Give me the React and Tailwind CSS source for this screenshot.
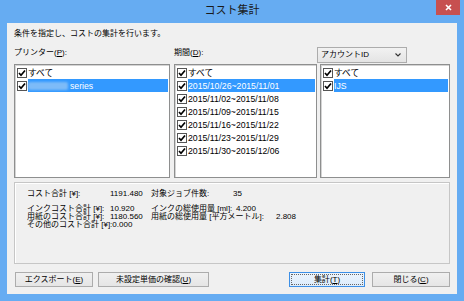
import React from 'react';

const PERIODS = [
  '2015/10/26~2015/11/01',
  '2015/11/02~2015/11/08',
  '2015/11/09~2015/11/15',
  '2015/11/16~2015/11/22',
  '2015/11/23~2015/11/29',
  '2015/11/30~2015/12/06',
];

const Check = () => (
  <span className="w-[10px] h-[10px] shrink-0 border border-[#555] bg-white flex items-center justify-center">
    <svg width="8" height="8" viewBox="0 0 8 8">
      <path d="M1 4 L3 6.2 L7 1.5" stroke="#000" strokeWidth="1.7" fill="none" />
    </svg>
  </span>
);

const Row = ({ children, selected }) => (
  <div className="h-[13px] flex items-center">
    <Check />
    <span
      className={`flex-1 h-[13px] ml-[1px] mr-[1px] flex items-center whitespace-nowrap text-[8.7px] ${
        selected ? 'bg-[#3399ff] text-white' : ''
      }`}
    >
      {children}
    </span>
  </div>
);

const ListBox = ({ className, children }) => (
  <div
    className={`h-[114px] bg-white border border-[#8e8f8f] shadow-[inset_1px_1px_0_#d4d4d4] pt-[1px] pl-[2px] ${className}`}
  >
    {children}
  </div>
);

const Key = ({ k }) => (
  <>
    (<span className="underline underline-offset-[1px]">{k}</span>)
  </>
);

const Button = ({ className, children, primary }) => (
  <div
    className={`h-[15px] flex items-center justify-center border ${
      primary
        ? 'border-[#3c8fe6] bg-gradient-to-b from-[#ecf4fc] to-[#dcecfc] p-[1px]'
        : 'border-[#acacac] bg-gradient-to-b from-[#f0f0f0] to-[#e5e5e5]'
    } ${className}`}
  >
    {children}
  </div>
);

export default function App() {
  return (
    <div className="w-[464px] h-[301px] bg-[#66acf2] flex flex-col text-[8px] leading-[10px] text-black font-['Liberation_Sans','Noto_Sans_CJK_JP',sans-serif]">
      <div className="relative h-[23px] flex items-center justify-center">
        <span className="text-[11px] leading-[12px] -mt-[3px] text-[#1a1a1a]">コスト集計</span>
        <div className="absolute top-0 right-[4px] w-[24px] h-[15px] bg-[#c75050] flex items-center justify-center">
          <svg width="7" height="7" viewBox="0 0 7 7">
            <path d="M1 1 L6 6 M6 1 L1 6" stroke="#fff" strokeWidth="1.6" />
          </svg>
        </div>
      </div>

      <div className="mx-[7px] h-[271px] bg-[#f0f0f0] flex flex-col px-[7px] pt-[6px]">
        <div className="h-[10px] whitespace-nowrap">条件を指定し、コストの集計を行います。</div>

        <div className="mt-[8px] flex">
          <div className="w-[156px] flex flex-col">
            <div className="h-[17px] pt-[1px]">
              プリンター<Key k="P" />:
            </div>
            <ListBox>
              <Row>すべて</Row>
              <Row selected>
                <span className="w-[40px] h-[8px] bg-[#7dbbf8] blur-[1px] rounded-[2px]" />
                <span className="ml-[2px]">series</span>
              </Row>
            </ListBox>
          </div>

          <div className="w-[143px] ml-[4px] flex flex-col">
            <div className="h-[17px] pt-[1px]">
              期間<Key k="D" />:
            </div>
            <ListBox>
              <Row>すべて</Row>
              {PERIODS.map((p, i) => (
                <Row key={p} selected={i === 0}>
                  {p}
                </Row>
              ))}
            </ListBox>
          </div>

          <div className="w-[130px] ml-[3px] flex flex-col">
            <div className="h-[17px]">
              <div className="-ml-[3px] w-[90px] h-[16px] border border-[#acacac] bg-gradient-to-b from-[#f2f2f2] to-[#e4e4e4] flex items-center justify-between pl-[3px] pr-[5px]">
                <span>アカウントID</span>
                <svg width="6" height="4" viewBox="0 0 6 4">
                  <path d="M0.5 0.5 L3 3 L5.5 0.5" stroke="#333" strokeWidth="1.1" fill="none" />
                </svg>
              </div>
            </div>
            <ListBox>
              <Row>すべて</Row>
              <Row selected>IJS</Row>
            </ListBox>
          </div>
        </div>

        <div className="mt-[4px] h-[82px] border border-[#c6c6c6] shadow-[inset_1px_1px_0_#ffffff] pt-[7px] pl-[12px] leading-[8px] whitespace-nowrap">
          <div className="flex h-[8px]">
            <span className="w-[83px]">コスト合計 [¥]:</span>
            <span className="w-[41px]">1191.480</span>
            <span className="w-[82px]">対象ジョブ件数:</span>
            <span>35</span>
          </div>
          <div className="flex h-[8px] mt-[7px]">
            <span className="w-[83px]">インクコスト合計 [¥]:</span>
            <span className="w-[41px]">10.920</span>
            <span className="min-w-[85px]">インクの総使用量 [ml]:</span>
            <span>4.200</span>
          </div>
          <div className="flex h-[8px]">
            <span className="w-[83px]">用紙のコスト合計 [¥]:</span>
            <span className="w-[41px]">1180.560</span>
            <span className="min-w-[125px]">用紙の総使用量 [平方メートル]:</span>
            <span>2.808</span>
          </div>
          <div className="flex h-[8px]">
            <span className="min-w-[83px]">その他のコスト合計 [¥]:</span>
            <span>0.000</span>
          </div>
        </div>

        <div className="mt-[8px] flex pl-[1px]">
          <Button className="w-[78px]">
            エクスポート<Key k="E" />
          </Button>
          <Button className="w-[111px] ml-[5px]">
            未設定単価の確認<Key k="U" />
          </Button>
          <Button primary className="w-[76px] ml-auto">
            <span className="w-full h-full flex items-center justify-center border border-dotted border-[#666]">
              集計<Key k="T" />
            </span>
          </Button>
          <Button className="w-[78px] ml-[7px]">
            閉じる<Key k="C" />
          </Button>
        </div>
      </div>
    </div>
  );
}
